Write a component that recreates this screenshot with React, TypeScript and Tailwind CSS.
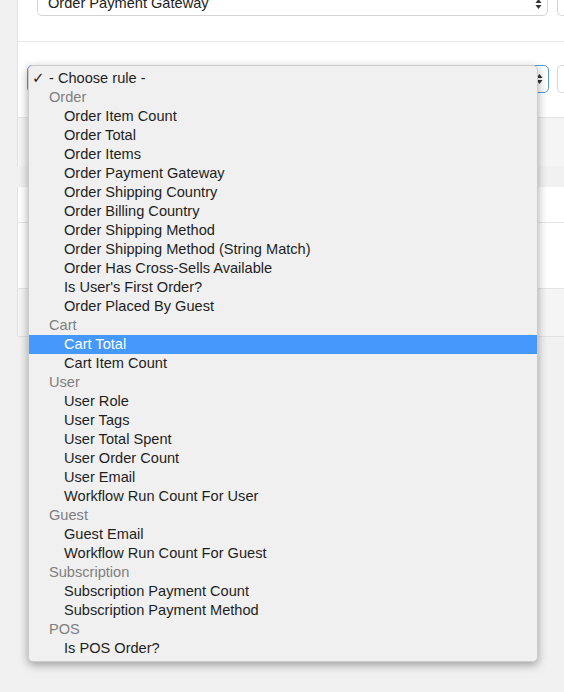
import React from "react";

type Row = { label: string; kind: "choose" | "group" | "item"; selected?: boolean };

const groups: [string, string[]][] = [
  ["Order", [
    "Order Item Count",
    "Order Total",
    "Order Items",
    "Order Payment Gateway",
    "Order Shipping Country",
    "Order Billing Country",
    "Order Shipping Method",
    "Order Shipping Method (String Match)",
    "Order Has Cross-Sells Available",
    "Is User's First Order?",
    "Order Placed By Guest",
  ]],
  ["Cart", ["Cart Total", "Cart Item Count"]],
  ["User", ["User Role", "User Tags", "User Total Spent", "User Order Count", "User Email", "Workflow Run Count For User"]],
  ["Guest", ["Guest Email", "Workflow Run Count For Guest"]],
  ["Subscription", ["Subscription Payment Count", "Subscription Payment Method"]],
  ["POS", ["Is POS Order?"]],
];

const rows: Row[] = [{ label: "- Choose rule -", kind: "choose" }];
groups.forEach(([g, items]) => {
  rows.push({ label: g, kind: "group" });
  items.forEach((i) => rows.push({ label: i, kind: "item", selected: i === "Cart Total" }));
});

function Arrows() {
  return (
    <svg width="7" height="12" viewBox="0 0 7 12" className="block">
      <path d="M0.5 5 L3.5 1 L6.5 5 Z" fill="#333" />
      <path d="M0.5 7 L3.5 11 L6.5 7 Z" fill="#333" />
    </svg>
  );
}

export default function App() {
  return (
    <div
      className="relative w-[564px] h-[692px] overflow-hidden bg-[#f1f1f1] pl-[17px]"
      style={{ fontFamily: '"Liberation Sans", Arial, sans-serif' }}
    >
      {/* panel 1 */}
      <div className="bg-white border-l border-[#e2e2e2]">
        <div className="h-[42px] border-b border-[#e8e8e8] flex gap-[9px] pl-[19px]">
          <div className="mt-[-12px] h-[28px] w-[511px] border border-[#d4d4d4] rounded-[5px] flex items-center justify-between pl-[10px] pr-[5px] pt-[3px] text-[14.6px] text-[#222]">
            <span>Order Payment Gateway</span>
            <Arrows />
          </div>
          <div className="mt-[-12px] h-[28px] flex-1 border border-[#d4d4d4] rounded-l-[5px] border-r-0" />
        </div>
        <div className="h-[76px] border-b border-[#e5e5e5] flex gap-[8px] pl-[9px] pt-[23px]">
          <div className="h-[28px] w-[522px] border border-[#5b9dd9] rounded-[5px] flex items-center justify-end pr-[5px]">
            <Arrows />
          </div>
          <div className="h-[28px] flex-1 border border-[#d8d8d8] rounded-l-[5px] border-r-0" />
        </div>
        <div className="h-[48px] bg-[#f5f5f5]" />
      </div>
      <div className="h-[21px]" />
      {/* panel 2 */}
      <div className="bg-white border-l border-[#e2e2e2]">
        <div className="h-[36px] border-b border-[#e5e5e5]" />
        <div className="h-[66px] border-b border-[#e5e5e5]" />
        <div className="h-[48px] bg-[#f5f5f5] border-b border-[#e2e2e2]" />
      </div>

      {/* dropdown overlay */}
      <div className="absolute left-[28px] top-[65px] w-[510px] bg-[#f0f0f0] rounded-[5px] py-[3px] shadow-[0_3px_10px_rgba(0,0,0,0.35)] border border-[#cdcdcd] text-[14.6px]">
        {rows.map((r, idx) => (
          <div
            key={idx}
            className={
              "h-[19px] leading-[19px] whitespace-nowrap flex " +
              (r.selected ? "bg-[#4598fc] text-white" : r.kind === "group" ? "text-[#7f7f7f]" : "text-[#1e1e1e]")
            }
          >
            {r.kind === "choose" ? (
              <>
                <span className="w-[20px] pl-[3px] text-[15px]" style={{ fontFamily: '"DejaVu Sans", sans-serif' }}>✓</span>
                <span>{r.label}</span>
              </>
            ) : r.kind === "group" ? (
              <span className="pl-[20px]">{r.label}</span>
            ) : (
              <span className="pl-[35px]">{r.label}</span>
            )}
          </div>
        ))}
      </div>
    </div>
  );
}
